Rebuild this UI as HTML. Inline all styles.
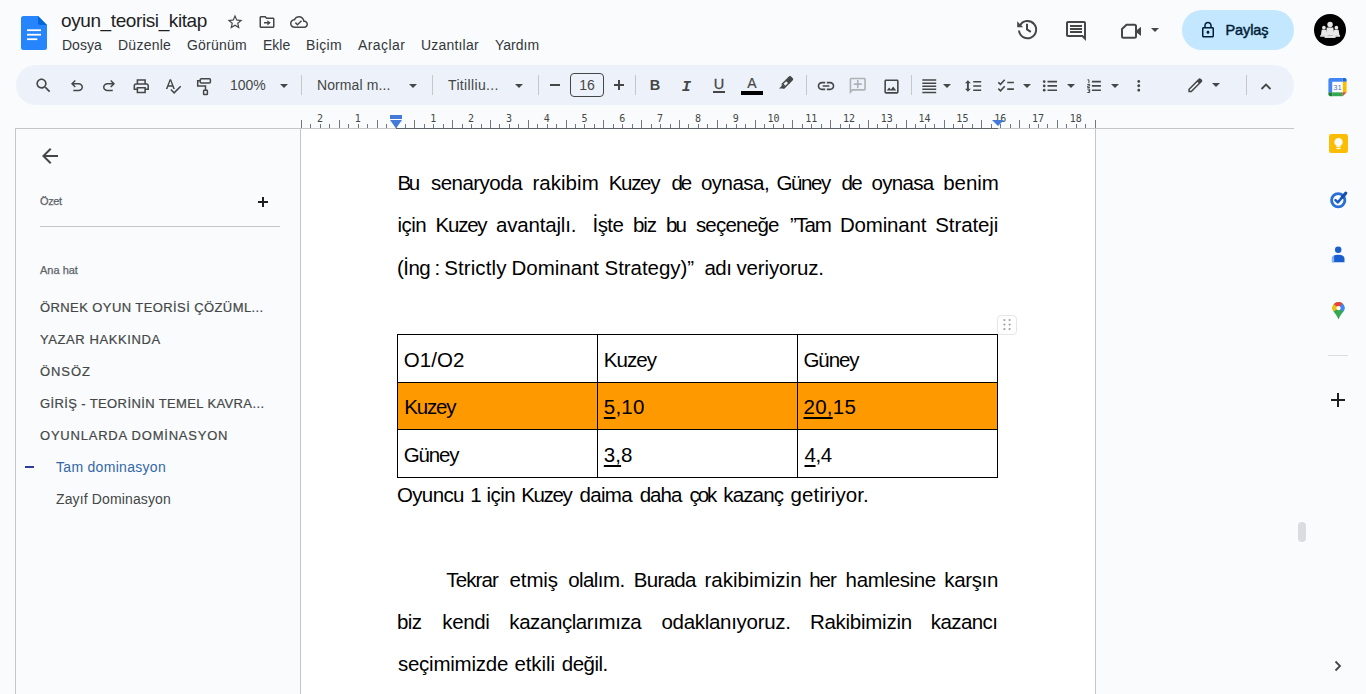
<!DOCTYPE html>
<html lang="tr">
<head>
<meta charset="utf-8">
<title>oyun_teorisi_kitap - Google Dokümanlar</title>
<style>
*{box-sizing:border-box;margin:0;padding:0}
html,body{width:1366px;height:694px;overflow:hidden;background:#f9fbfd;font-family:"Liberation Sans",sans-serif;color:#1f1f1f}
.abs{position:absolute}
svg{display:block;overflow:visible}
#app{position:relative;width:1366px;height:694px;overflow:hidden}
#title{left:61px;top:8.500px;font-size:19px;line-height:24px;color:#1f1f1f;white-space:nowrap;letter-spacing:-0.400px}
.menu{top:36.400px;font-size:14px;line-height:18px;color:#34373a;white-space:nowrap}
#toolbar{left:16px;top:65px;width:1278px;height:40px;border-radius:20px;background:#edf2fa}
.tsep{top:75px;width:1px;height:20px;background:#c7c7c7}
.ttext{top:76px;font-size:14px;line-height:18px;color:#444746;white-space:nowrap}
#share{left:1182px;top:10px;width:112px;height:40px;border-radius:20px;background:#c2e7ff}
#share span{position:absolute;left:43.500px;top:11px;font-size:14.500px;font-weight:normal;color:#001d35;line-height:18px;letter-spacing:-0.100px;-webkit-text-stroke:0.450px #001d35}
#avatar{left:1314px;top:14px;width:32px;height:32px;border-radius:50%;background:#000}
#side{left:15px;top:128px;width:286px;height:570px;border:1px solid #c4c7c5;background:#f9fbfd}
.ol{left:40px;font-size:13px;line-height:16px;color:#444746;white-space:nowrap;letter-spacing:0.360px;-webkit-text-stroke:0.200px #444746}
.ol2{left:56px;font-size:14px;line-height:16px;color:#444746;white-space:nowrap}
.lbl{left:40px;font-size:11px;line-height:14px;color:#5f6368;white-space:nowrap;-webkit-text-stroke:0.250px #5f6368}
#paper{left:300px;top:129px;width:796px;height:570px;background:#fff;border:1px solid #c4c7c5;border-top:none}
.tk{width:1px;background:#747779}
.rn{top:112px;width:30px;text-align:center;font-family:"DejaVu Sans Mono",monospace;font-size:10px;line-height:14px;color:#444746}
.w{font-size:20.500px;line-height:28px;color:#000;white-space:pre}
u{text-decoration:underline;text-decoration-thickness:1.500px;text-underline-offset:2.500px}
</style>
</head>
<body>
<div id="app">
<div class="abs" id="docicon" style="left:21px;top:16px;width:26px;height:34px">
<svg width="26" height="34" viewBox="0 0 26 34"><path d="M2.500 0H17L26 9V31.500A2.500 2.500 0 0 1 23.500 34H2.500A2.500 2.500 0 0 1 0 31.500V2.500A2.500 2.500 0 0 1 2.500 0Z" fill="#2684fc"/><path d="M17 0L26 9H19.500A2.500 2.500 0 0 1 17 6.500Z" fill="#0066da"/><rect x="6" y="13.300" width="14" height="1.800" fill="#fff"/><rect x="6" y="17.800" width="14" height="1.800" fill="#fff"/><rect x="6" y="22.300" width="10.300" height="1.800" fill="#fff"/></svg>
</div>
<div class="abs" id="title">oyun_teorisi_kitap</div>
<div class="abs menu" style="left:62px;letter-spacing:0px">Dosya</div>
<div class="abs menu" style="left:118px;letter-spacing:0.25px">Düzenle</div>
<div class="abs menu" style="left:187px;letter-spacing:0.2px">Görünüm</div>
<div class="abs menu" style="left:263px;letter-spacing:0px">Ekle</div>
<div class="abs menu" style="left:306px;letter-spacing:0.35px">Biçim</div>
<div class="abs menu" style="left:358px;letter-spacing:0.43px">Araçlar</div>
<div class="abs menu" style="left:421px;letter-spacing:0.19px">Uzantılar</div>
<div class="abs menu" style="left:495px;letter-spacing:0px">Yardım</div>

<svg class="abs" style="left:226.0px;top:13.0px" width="18" height="18" viewBox="0 0 24 24" ><path d="M22 9.240l-7.190-.620L12 2 9.190 8.630 2 9.240l5.460 4.730L5.820 21 12 17.270 18.180 21l-1.630-7.030L22 9.240zM12 15.400l-3.760 2.270 1-4.280-3.320-2.880 4.380-.380L12 6.100l1.710 4.040 4.380.380-3.320 2.880 1 4.280L12 15.400z" fill="#444746"/></svg>
<svg class="abs" style="left:258.0px;top:13.0px" width="18" height="18" viewBox="0 0 24 24" ><path d="M20 6h-8l-2-2H4c-1.100 0-2 .900-2 2v12c0 1.100.900 2 2 2h16c1.100 0 2-.900 2-2V8c0-1.100-.900-2-2-2zm0 12H4V6h5.170l2 2H20v10zm-7.500-1.500L17 13l-4.500-3.500V12H8v2h4.500v2.500z" fill="#444746"/></svg>
<svg class="abs" style="left:290.0px;top:13.0px" width="18" height="18" viewBox="0 0 24 24" ><path d="M19.350 10.040C18.670 6.590 15.640 4 12 4 9.110 4 6.600 5.640 5.350 8.040 2.340 8.360 0 10.910 0 14c0 3.310 2.690 6 6 6h13c2.760 0 5-2.240 5-5 0-2.640-2.050-4.780-4.650-4.960zM19 18H6c-2.210 0-4-1.790-4-4 0-2.050 1.530-3.760 3.560-3.970l1.070-.110.500-.950C8.080 7.140 9.940 6 12 6c2.620 0 4.880 1.860 5.390 4.430l.300 1.500 1.530.110c1.560.100 2.780 1.410 2.780 2.960 0 1.650-1.350 3-3 3zm-9-3.820l-2.090-2.090L6.500 13.500 10 17l6.010-6.010-1.410-1.410z" fill="#444746"/></svg>
<svg class="abs" style="left:1015px;top:16.8px" width="24" height="24" viewBox="0 0 24 24" ><path d="M5.200 8.200A8.600 8.600 0 1 1 4 13.500" fill="none" stroke="#444746" stroke-width="2"/><path d="M2.200 4.300V10.200H8.100Z" fill="#444746"/><path d="M12 6.800V12.400L15.800 14.900" fill="none" stroke="#444746" stroke-width="2"/></svg>
<svg class="abs" style="left:1064.0px;top:18.5px" width="24" height="24" viewBox="0 0 24 24" ><path d="M21.990 4c0-1.100-.890-2-1.990-2H4c-1.100 0-2 .900-2 2v12c0 1.100.900 2 2 2h14l4 4-.010-18zM20 4v13.170L18.830 16H4V4h16zM6 12h12v2H6zm0-3h12v2H6zm0-3h12v2H6z" fill="#444746"/></svg>
<svg class="abs" style="left:1119px;top:20px" width="24" height="24" viewBox="0 0 24 24" ><path d="M7.500 4.700H15.500Q17 4.700 17 6.200V16.300Q17 17.800 15.500 17.800H4.500Q3 17.800 3 16.300V9Z" fill="none" stroke="#444746" stroke-width="2" stroke-linejoin="round"/><path d="M17 10.800L22 6.800V16L17 12Z" fill="#444746"/></svg>
<svg class="abs" style="left:1151px;top:28px" width="8" height="4" viewBox="0 0 8 4" ><path d="M0 0H8L4 4Z" fill="#444746"/></svg>
<div class="abs" id="share"><span>Paylaş</span></div>
<svg class="abs" style="left:1199.0px;top:21.0px" width="18" height="18" viewBox="0 0 24 24" ><path d="M18 8h-1V6c0-2.760-2.240-5-5-5S7 3.240 7 6v2H6c-1.100 0-2 .900-2 2v10c0 1.100.900 2 2 2h12c1.100 0 2-.900 2-2V10c0-1.100-.900-2-2-2zM9 6c0-1.660 1.340-3 3-3s3 1.340 3 3v2H9V6zm9 14H6V10h12v10zm-6-3c1.100 0 2-.900 2-2s-.900-2-2-2-2 .900-2 2 .900 2 2 2z" fill="#001d35"/></svg>
<div class="abs" id="avatar"></div>
<svg class="abs" style="left:1314px;top:14px" width="32" height="32" viewBox="0 0 32 32" ><circle cx="9.9" cy="13.698" r="1.848" fill="#e8e8e8"/><path d="M7.716 15.713999999999999H12.084L12.924 21.09H6.876Z" fill="#e8e8e8"/><rect x="6.204000000000001" y="21.09" width="7.392" height="1.68" fill="#e8e8e8"/><circle cx="22.4" cy="13.698" r="1.848" fill="#e8e8e8"/><path d="M20.215999999999998 15.713999999999999H24.584L25.424 21.09H19.375999999999998Z" fill="#e8e8e8"/><rect x="18.703999999999997" y="21.09" width="7.392" height="1.68" fill="#e8e8e8"/><circle cx="16.05" cy="10.528" r="2.728" fill="#e8e8e8"/><path d="M12.826 13.504H19.274L20.514000000000003 21.44H11.586Z" fill="#e8e8e8"/><rect x="10.594000000000001" y="21.44" width="10.912" height="2.48" fill="#e8e8e8"/></svg>
<div class="abs" id="toolbar"></div>
<svg class="abs" style="left:34.0px;top:76.0px" width="19" height="19" viewBox="0 0 24 24" ><path d="M15.500 14h-.790l-.280-.270C15.410 12.590 16 11.110 16 9.500 16 5.910 13.090 3 9.500 3S3 5.910 3 9.500 5.910 16 9.500 16c1.610 0 3.090-.590 4.230-1.570l.270.280v.790l5 4.990L20.490 19l-4.990-5zm-6 0C7.010 14 5 11.990 5 9.500S7.010 5 9.500 5 14 7.010 14 9.500 11.990 14 9.500 14z" fill="#444746"/></svg>
<svg class="abs" style="left:68.0px;top:76.5px" width="18" height="18" viewBox="0 -960 960 960" ><path d="M280-200v-80h284q63 0 109.500-40T720-420q0-60-46.500-100T564-560H312l104 104-56 56-200-200 200-200 56 56-104 104h252q97 0 166.500 63T800-420q0 94-69.500 157T564-200H280Z" fill="#444746"/></svg>
<svg class="abs" style="left:100.0px;top:76.5px" width="18" height="18" viewBox="0 -960 960 960" ><path d="M396-200q-97 0-166.500-63T160-420q0-94 69.500-157T396-640h252L544-744l56-56 200 200-200 200-56-56 104-104H396q-63 0-109.500 40T240-420q0 60 46.500 100T396-280h284v80H396Z" fill="#444746"/></svg>
<svg class="abs" style="left:131.75px;top:76.75px" width="18.5" height="18.5" viewBox="0 0 24 24" ><path d="M19 8h-1V3H6v5H5c-1.660 0-3 1.340-3 3v6h4v4h12v-4h4v-6c0-1.660-1.340-3-3-3zM8 5h8v3H8V5zm8 14H8v-4h8v4zm2-4v-2H6v2H4v-4c0-.550.450-1 1-1h14c.550 0 1 .450 1 1v4h-2z" fill="#444746"/></svg>
<svg class="abs" style="left:164.0px;top:76.5px" width="18" height="18" viewBox="0 0 24 24" ><path d="M12.450 16h2.090L9.430 3H7.570L2.460 16h2.090l1.120-3h5.640l1.140 3zm-6.020-5L8.500 5.480 10.570 11H6.430zm15.160.590l-8.090 8.090L9.830 16l-1.410 1.410 5.090 5.090L23 13l-1.410-1.410z" fill="#444746"/></svg>
<svg class="abs" style="left:194px;top:76px" width="20" height="20" viewBox="194 76 20 20" ><rect x="200.200" y="78.700" width="10.200" height="4.200" rx="1" fill="none" stroke="#444746" stroke-width="1.500"/><path d="M200.200 80.800H197.700V86H205.500V90.300" fill="none" stroke="#444746" stroke-width="1.500"/><rect x="203.600" y="90.300" width="3.800" height="4.200" rx="0.500" fill="none" stroke="#444746" stroke-width="1.500"/></svg>
<div class="abs ttext" style="left:230px">100%</div>
<svg class="abs" style="left:280px;top:84px" width="8" height="4" viewBox="0 0 8 4" ><path d="M0 0H8L4 4Z" fill="#444746"/></svg>
<div class="abs tsep" style="left:301px"></div>
<div class="abs ttext" style="left:317px;letter-spacing:0.100px">Normal m...</div>
<svg class="abs" style="left:409px;top:83.5px" width="8" height="4" viewBox="0 0 8 4" ><path d="M0 0H8L4 4Z" fill="#444746"/></svg>
<div class="abs tsep" style="left:432px"></div>
<div class="abs ttext" style="left:448px;letter-spacing:0.350px">Titilliu...</div>
<svg class="abs" style="left:515px;top:83.5px" width="8" height="4" viewBox="0 0 8 4" ><path d="M0 0H8L4 4Z" fill="#444746"/></svg>
<div class="abs tsep" style="left:538px"></div>
<div class="abs" style="left:550px;top:84.200px;width:10px;height:1.600px;background:#444746"></div>
<div class="abs" style="left:570px;top:73px;width:34px;height:24px;border:1px solid #444746;border-radius:4px;font-size:14px;line-height:22px;text-align:center;color:#444746">16</div>
<div class="abs" style="left:614px;top:84.200px;width:10px;height:1.600px;background:#444746"></div>
<div class="abs" style="left:618.200px;top:80px;width:1.600px;height:10px;background:#444746"></div>
<div class="abs tsep" style="left:635px"></div>
<div class="abs" style="left:649px;top:76px;width:12px;font-size:14.500px;line-height:18px;font-weight:bold;color:#444746;text-align:center">B</div>
<div class="abs" style="left:679.500px;top:78.200px;width:14px;font-family:'Liberation Mono',monospace;font-size:15.500px;line-height:18px;font-weight:bold;font-style:italic;color:#444746;text-align:center">I</div>
<div class="abs" style="left:711px;top:75.400px;width:16px;font-size:14.500px;line-height:18px;color:#444746;text-align:center;-webkit-text-stroke:0.300px #444746">U</div>
<div class="abs" style="left:713px;top:91px;width:12px;height:1.500px;background:#444746"></div>
<div class="abs" style="left:744px;top:73.600px;width:16px;font-size:14px;line-height:18px;color:#444746;text-align:center;-webkit-text-stroke:0.200px #444746">A</div>
<div class="abs" style="left:741px;top:91px;width:22px;height:4px;background:#000"></div>
<svg class="abs" style="left:776px;top:72px" width="20" height="20" viewBox="776 72 20 20" ><g transform="translate(787.400 81.800) rotate(-45)"><path d="M0 -2.700H5A1.300 1.300 0 0 1 6.300 -1.400V1.400A1.300 1.300 0 0 1 5 2.700H0Z" fill="#444746"/><rect x="-4.900" y="-2" width="5.200" height="4" fill="none" stroke="#444746" stroke-width="1.400"/><path d="M-5.400 -2.700L-7.600 -0.500V2.700H-5.400Z" fill="#444746"/></g><path d="M779 88.600L781.600 86L784.600 88.600Z" fill="#444746"/></svg>
<div class="abs tsep" style="left:806px"></div>
<svg class="abs" style="left:816.0px;top:76.0px" width="20" height="20" viewBox="0 0 24 24" ><path d="M3.900 12c0-1.710 1.390-3.100 3.100-3.100h4V7H7c-2.760 0-5 2.240-5 5s2.240 5 5 5h4v-1.900H7c-1.710 0-3.100-1.390-3.100-3.100zM8 13h8v-2H8v2zm9-6h-4v1.900h4c1.710 0 3.100 1.390 3.100 3.100s-1.390 3.100-3.100 3.100h-4V17h4c2.760 0 5-2.240 5-5s-2.240-5-5-5z" fill="#444746"/></svg>
<svg class="abs" style="left:848.25px;top:76.25px" width="19.5" height="19.5" viewBox="0 0 24 24" ><g transform="translate(24,0) scale(-1,1)"><path d="M22 4c0-1.100-.900-2-2-2H4c-1.100 0-2 .900-2 2v12c0 1.100.900 2 2 2h14l4 4V4zm-2 13.170L18.830 16H4V4h16v13.170zM13 5h-2v4H7v2h4v4h2v-4h4V9h-4z" fill="#aeb2b7"/></g></svg>
<svg class="abs" style="left:881.5px;top:76.5px" width="19" height="19" viewBox="0 0 24 24" ><path d="M19 5v14H5V5h14m0-2H5c-1.100 0-2 .900-2 2v14c0 1.100.900 2 2 2h14c1.100 0 2-.900 2-2V5c0-1.100-.900-2-2-2zm-4.860 8.860l-3 3.870L9 13.140 6 17h12l-3.860-5.140z" fill="#444746"/></svg>
<div class="abs tsep" style="left:911px"></div>
<svg class="abs" style="left:919.75px;top:76.75px" width="18.5" height="18.5" viewBox="0 0 24 24" ><path d="M3 21h18v-2H3v2zm0-4h18v-2H3v2zm0-4h18v-2H3v2zm0-4h18V7H3v2zm0-6v2h18V3H3z" fill="#444746"/></svg>
<svg class="abs" style="left:943px;top:83.5px" width="8" height="4" viewBox="0 0 8 4" ><path d="M0 0H8L4 4Z" fill="#444746"/></svg>
<svg class="abs" style="left:962px;top:76px" width="22" height="20" viewBox="962 76 22 20" ><path d="M967.900 82.500V89.500" stroke="#444746" stroke-width="1.900" fill="none"/><path d="M965 83.300L967.900 80.200L970.800 83.300Z M965 88.700L967.900 91.800L970.800 88.700Z" fill="#444746"/><path d="M973.200 81.800H981.200M973.200 86H981.200M973.200 90.200H981.200" stroke="#444746" stroke-width="1.600" fill="none"/></svg>
<svg class="abs" style="left:996px;top:76px" width="20" height="20" viewBox="996 76 20 20" ><path d="M998.300 82.300L1000.500 84.400L1004.700 79.800M998.300 88.700L1000.500 90.800L1004.700 86.200" stroke="#444746" stroke-width="1.600" fill="none"/><path d="M1007.200 82.500H1013.900M1007.200 89.100H1013.900" stroke="#444746" stroke-width="1.600" fill="none"/></svg>
<svg class="abs" style="left:1023px;top:83.5px" width="8" height="4" viewBox="0 0 8 4" ><path d="M0 0H8L4 4Z" fill="#444746"/></svg>
<svg class="abs" style="left:1040px;top:76px" width="20" height="20" viewBox="1040 76 20 20" ><circle cx="1044.200" cy="81.600" r="1.350" fill="#444746"/><circle cx="1044.200" cy="85.900" r="1.350" fill="#444746"/><circle cx="1044.200" cy="90.200" r="1.350" fill="#444746"/><path d="M1047.500 81.600H1057M1047.500 85.900H1057M1047.500 90.200H1057" stroke="#444746" stroke-width="1.600" fill="none"/></svg>
<svg class="abs" style="left:1067px;top:83.5px" width="8" height="4" viewBox="0 0 8 4" ><path d="M0 0H8L4 4Z" fill="#444746"/></svg>
<svg class="abs" style="left:1084px;top:76px" width="20" height="20" viewBox="1084 76 20 20" ><path d="M1087.500 79.800H1088.900V83.300M1087.300 84.500H1089.700V86H1087.700V87.600H1090M1087.300 89.100H1089.700V92.500H1087.300M1088.100 90.800H1089.700" stroke="#444746" stroke-width="1" fill="none"/><path d="M1091.900 81.600H1100.900M1091.900 85.900H1100.900M1091.900 90.200H1100.900" stroke="#444746" stroke-width="1.600" fill="none"/></svg>
<svg class="abs" style="left:1111px;top:83.5px" width="8" height="4" viewBox="0 0 8 4" ><path d="M0 0H8L4 4Z" fill="#444746"/></svg>
<svg class="abs" style="left:1130.25px;top:76.95px" width="17.5" height="17.5" viewBox="0 0 24 24" ><path d="M12 8c1.100 0 2-.900 2-2s-.900-2-2-2-2 .900-2 2 .900 2 2 2zm0 2c-1.100 0-2 .900-2 2s.900 2 2 2 2-.900 2-2-.900-2-2-2zm0 6c-1.100 0-2 .900-2 2s.900 2 2 2 2-.900 2-2-.900-2-2-2z" fill="#444746"/></svg>
<svg class="abs" style="left:1185.6000000000001px;top:75.7px" width="18.6" height="18.6" viewBox="0 -960 960 960" ><path d="M200-200h57l391-391-57-57-391 391v57Zm-80 80v-170l528-527q12-11 26.500-17t30.500-6q16 0 31 6t26 18l55 56q12 11 17.500 26t5.500 30q0 16-5.500 30.500T817-647L290-120H120Zm640-584-56-56 56 56Zm-141 85-28-29 57 57-29-28Z" fill="#444746"/></svg>
<svg class="abs" style="left:1212px;top:83px" width="8" height="4" viewBox="0 0 8 4" ><path d="M0 0H8L4 4Z" fill="#444746"/></svg>
<div class="abs tsep" style="left:1246px"></div>
<svg class="abs" style="left:1260px;top:82px" width="12" height="8" viewBox="0 0 12 8" ><path d="M1.500 7L6 2.500L10.500 7" fill="none" stroke="#444746" stroke-width="1.800"/></svg>
<div class="abs" style="left:15px;top:128px;width:1279px;height:1px;background:#c4c7c5"></div>
<div class="abs" style="left:396px;top:128px;width:602px;height:1px;background:#5f6368"></div>
<div class="abs tk" style="left:301px;top:120px;height:8px"></div>
<div class="abs tk" style="left:310px;top:124px;height:4px"></div>
<div class="abs tk" style="left:320px;top:124px;height:4px"></div>
<div class="abs tk" style="left:329px;top:124px;height:4px"></div>
<div class="abs tk" style="left:339px;top:120px;height:8px"></div>
<div class="abs tk" style="left:348px;top:124px;height:4px"></div>
<div class="abs tk" style="left:358px;top:124px;height:4px"></div>
<div class="abs tk" style="left:367px;top:124px;height:4px"></div>
<div class="abs tk" style="left:377px;top:120px;height:8px"></div>
<div class="abs tk" style="left:386px;top:124px;height:4px"></div>
<div class="abs tk" style="left:396px;top:124px;height:4px"></div>
<div class="abs tk" style="left:405px;top:124px;height:4px"></div>
<div class="abs tk" style="left:414px;top:120px;height:8px"></div>
<div class="abs tk" style="left:424px;top:124px;height:4px"></div>
<div class="abs tk" style="left:433px;top:124px;height:4px"></div>
<div class="abs tk" style="left:443px;top:124px;height:4px"></div>
<div class="abs tk" style="left:452px;top:120px;height:8px"></div>
<div class="abs tk" style="left:462px;top:124px;height:4px"></div>
<div class="abs tk" style="left:471px;top:124px;height:4px"></div>
<div class="abs tk" style="left:481px;top:124px;height:4px"></div>
<div class="abs tk" style="left:490px;top:120px;height:8px"></div>
<div class="abs tk" style="left:499px;top:124px;height:4px"></div>
<div class="abs tk" style="left:509px;top:124px;height:4px"></div>
<div class="abs tk" style="left:518px;top:124px;height:4px"></div>
<div class="abs tk" style="left:528px;top:120px;height:8px"></div>
<div class="abs tk" style="left:537px;top:124px;height:4px"></div>
<div class="abs tk" style="left:547px;top:124px;height:4px"></div>
<div class="abs tk" style="left:556px;top:124px;height:4px"></div>
<div class="abs tk" style="left:566px;top:120px;height:8px"></div>
<div class="abs tk" style="left:575px;top:124px;height:4px"></div>
<div class="abs tk" style="left:584px;top:124px;height:4px"></div>
<div class="abs tk" style="left:594px;top:124px;height:4px"></div>
<div class="abs tk" style="left:603px;top:120px;height:8px"></div>
<div class="abs tk" style="left:613px;top:124px;height:4px"></div>
<div class="abs tk" style="left:622px;top:124px;height:4px"></div>
<div class="abs tk" style="left:632px;top:124px;height:4px"></div>
<div class="abs tk" style="left:641px;top:120px;height:8px"></div>
<div class="abs tk" style="left:651px;top:124px;height:4px"></div>
<div class="abs tk" style="left:660px;top:124px;height:4px"></div>
<div class="abs tk" style="left:670px;top:124px;height:4px"></div>
<div class="abs tk" style="left:679px;top:120px;height:8px"></div>
<div class="abs tk" style="left:688px;top:124px;height:4px"></div>
<div class="abs tk" style="left:698px;top:124px;height:4px"></div>
<div class="abs tk" style="left:707px;top:124px;height:4px"></div>
<div class="abs tk" style="left:717px;top:120px;height:8px"></div>
<div class="abs tk" style="left:726px;top:124px;height:4px"></div>
<div class="abs tk" style="left:736px;top:124px;height:4px"></div>
<div class="abs tk" style="left:745px;top:124px;height:4px"></div>
<div class="abs tk" style="left:755px;top:120px;height:8px"></div>
<div class="abs tk" style="left:764px;top:124px;height:4px"></div>
<div class="abs tk" style="left:773px;top:124px;height:4px"></div>
<div class="abs tk" style="left:783px;top:124px;height:4px"></div>
<div class="abs tk" style="left:792px;top:120px;height:8px"></div>
<div class="abs tk" style="left:802px;top:124px;height:4px"></div>
<div class="abs tk" style="left:811px;top:124px;height:4px"></div>
<div class="abs tk" style="left:821px;top:124px;height:4px"></div>
<div class="abs tk" style="left:830px;top:120px;height:8px"></div>
<div class="abs tk" style="left:840px;top:124px;height:4px"></div>
<div class="abs tk" style="left:849px;top:124px;height:4px"></div>
<div class="abs tk" style="left:859px;top:124px;height:4px"></div>
<div class="abs tk" style="left:868px;top:120px;height:8px"></div>
<div class="abs tk" style="left:877px;top:124px;height:4px"></div>
<div class="abs tk" style="left:887px;top:124px;height:4px"></div>
<div class="abs tk" style="left:896px;top:124px;height:4px"></div>
<div class="abs tk" style="left:906px;top:120px;height:8px"></div>
<div class="abs tk" style="left:915px;top:124px;height:4px"></div>
<div class="abs tk" style="left:925px;top:124px;height:4px"></div>
<div class="abs tk" style="left:934px;top:124px;height:4px"></div>
<div class="abs tk" style="left:944px;top:120px;height:8px"></div>
<div class="abs tk" style="left:953px;top:124px;height:4px"></div>
<div class="abs tk" style="left:962px;top:124px;height:4px"></div>
<div class="abs tk" style="left:972px;top:124px;height:4px"></div>
<div class="abs tk" style="left:981px;top:120px;height:8px"></div>
<div class="abs tk" style="left:991px;top:124px;height:4px"></div>
<div class="abs tk" style="left:1000px;top:124px;height:4px"></div>
<div class="abs tk" style="left:1010px;top:124px;height:4px"></div>
<div class="abs tk" style="left:1019px;top:120px;height:8px"></div>
<div class="abs tk" style="left:1029px;top:124px;height:4px"></div>
<div class="abs tk" style="left:1038px;top:124px;height:4px"></div>
<div class="abs tk" style="left:1047px;top:124px;height:4px"></div>
<div class="abs tk" style="left:1057px;top:120px;height:8px"></div>
<div class="abs tk" style="left:1066px;top:124px;height:4px"></div>
<div class="abs tk" style="left:1076px;top:124px;height:4px"></div>
<div class="abs tk" style="left:1085px;top:124px;height:4px"></div>
<div class="abs tk" style="left:1095px;top:120px;height:8px"></div>
<div class="abs rn" style="left:304.9px">2</div>
<div class="abs rn" style="left:342.7px">1</div>
<div class="abs rn" style="left:418.3px">1</div>
<div class="abs rn" style="left:456.1px">2</div>
<div class="abs rn" style="left:493.9px">3</div>
<div class="abs rn" style="left:531.7px">4</div>
<div class="abs rn" style="left:569.5px">5</div>
<div class="abs rn" style="left:607.3px">6</div>
<div class="abs rn" style="left:645.1px">7</div>
<div class="abs rn" style="left:682.9px">8</div>
<div class="abs rn" style="left:720.7px">9</div>
<div class="abs rn" style="left:758.5px">10</div>
<div class="abs rn" style="left:796.3px">11</div>
<div class="abs rn" style="left:834.1px">12</div>
<div class="abs rn" style="left:871.8px">13</div>
<div class="abs rn" style="left:909.6px">14</div>
<div class="abs rn" style="left:947.4px">15</div>
<div class="abs rn" style="left:985.2px">16</div>
<div class="abs rn" style="left:1023.0px">17</div>
<div class="abs rn" style="left:1060.8px">18</div>
<svg class="abs" style="left:390px;top:115px" width="12" height="13" viewBox="0 0 12 13" ><rect x="0" y="0" width="12" height="4" fill="#437ad8"/><path d="M0 5H12L6.300 13H5.700Z" fill="#437ad8"/></svg>
<svg class="abs" style="left:992px;top:120px" width="12" height="6" viewBox="0 0 12 6" ><path d="M0 0H12L6 6Z" fill="#437ad8"/></svg>
<div class="abs" id="side"></div>
<svg class="abs" style="left:38.2px;top:143.8px" width="24" height="24" viewBox="0 0 24 24" ><path d="M20 11H7.830l5.590-5.590L12 4l-8 8 8 8 1.410-1.410L7.830 13H20v-2z" fill="#444746"/></svg>
<div class="abs lbl" style="top:194px;letter-spacing:-0.400px">Özet</div>
<div class="abs" style="left:258px;top:201.200px;width:10px;height:1.800px;background:#1f1f1f"></div>
<div class="abs" style="left:262.100px;top:197px;width:1.800px;height:10px;background:#1f1f1f"></div>
<div class="abs" style="left:40px;top:226px;width:240px;height:1px;background:#c4c7c5"></div>
<div class="abs lbl" style="top:263px">Ana hat</div>
<div class="abs ol" style="top:299.7px;letter-spacing:0.41px">ÖRNEK OYUN TEORİSİ ÇÖZÜML...</div>
<div class="abs ol" style="top:331.7px;letter-spacing:0.59px">YAZAR HAKKINDA</div>
<div class="abs ol" style="top:363.7px;letter-spacing:0.93px">ÖNSÖZ</div>
<div class="abs ol" style="top:395.7px;letter-spacing:0.38px">GİRİŞ - TEORİNİN TEMEL KAVRA...</div>
<div class="abs ol" style="top:427.7px;letter-spacing:0.78px">OYUNLARDA DOMİNASYON</div>
<div class="abs" style="left:25px;top:466px;width:9px;height:2px;background:#2b3d99"></div>
<div class="abs ol2" style="top:459px;color:#3366a6;letter-spacing:0.300px">Tam dominasyon</div>
<div class="abs ol2" style="top:491px;letter-spacing:0.130px">Zayıf Dominasyon</div>
<div class="abs" id="paper"></div>
<div class="abs" style="left:397px;top:334px;width:601px;height:144px;border:1px solid #000"></div>
<div class="abs" style="left:398px;top:383px;width:599px;height:46px;background:#ff9900"></div>
<div class="abs" style="left:397px;top:382px;width:601px;height:1px;background:#000"></div>
<div class="abs" style="left:397px;top:429px;width:601px;height:1px;background:#000"></div>
<div class="abs" style="left:597px;top:334px;width:1px;height:144px;background:#000"></div>
<div class="abs" style="left:797px;top:334px;width:1px;height:144px;background:#000"></div>
<div class="ln" id="l1">
<span class="abs w" style="left:397.6px;top:169.0px;letter-spacing:-2.60px">Bu</span> 
<span class="abs w" style="left:430.9px;top:169.0px;letter-spacing:-0.51px">senaryoda</span> 
<span class="abs w" style="left:532.4px;top:169.0px;letter-spacing:0.05px">rakibim</span> 
<span class="abs w" style="left:608.7px;top:169.0px;letter-spacing:-1.30px">Kuzey</span> 
<span class="abs w" style="left:671.4px;top:169.0px;letter-spacing:-2.00px">de</span> 
<span class="abs w" style="left:700.9px;top:169.0px;letter-spacing:-0.52px">oynasa,</span> 
<span class="abs w" style="left:776.4px;top:169.0px;letter-spacing:-1.38px">Güney</span> 
<span class="abs w" style="left:841.6px;top:169.0px;letter-spacing:-1.80px">de</span> 
<span class="abs w" style="left:871.6px;top:169.0px;letter-spacing:-0.72px">oynasa</span> 
<span class="abs w" style="left:943.2px;top:169.0px;letter-spacing:-0.05px">benim</span> 
</div>
<div class="ln" id="l2">
<span class="abs w" style="left:397.6px;top:211.0px;letter-spacing:-0.57px">için</span> 
<span class="abs w" style="left:435.5px;top:211.0px;letter-spacing:-1.22px">Kuzey</span> 
<span class="abs w" style="left:496.1px;top:211.0px;letter-spacing:-0.20px">avantajlı.</span> 
<span class="abs w" style="left:592.6px;top:211.0px;letter-spacing:-0.60px">İşte</span> 
<span class="abs w" style="left:633.0px;top:211.0px;letter-spacing:-1.15px">biz</span> 
<span class="abs w" style="left:665.9px;top:211.0px;letter-spacing:-1.70px">bu</span> 
<span class="abs w" style="left:695.9px;top:211.0px;letter-spacing:-0.77px">seçeneğe</span> 
<span class="abs w" style="left:789.9px;top:211.0px;letter-spacing:-1.23px">”Tam</span> 
<span class="abs w" style="left:839.9px;top:211.0px;letter-spacing:-0.17px">Dominant</span> 
<span class="abs w" style="left:935.3px;top:211.0px;letter-spacing:-0.11px">Strateji</span> 
</div>
<div class="ln" id="l3">
<span class="abs w" style="left:396.9px;top:254.0px;letter-spacing:-0.50px">(İng</span> 
<span class="abs w" style="left:434.4px;top:254.0px;letter-spacing:0.00px">:</span> 
<span class="abs w" style="left:444.2px;top:254.0px;letter-spacing:0.10px">Strictly</span> 
<span class="abs w" style="left:511.6px;top:254.0px;letter-spacing:-0.04px">Dominant</span> 
<span class="abs w" style="left:604.6px;top:254.0px;letter-spacing:-0.06px">Strategy)”</span> 
<span class="abs w" style="left:704.4px;top:254.0px;letter-spacing:-0.50px">adı</span> 
<span class="abs w" style="left:736.5px;top:254.0px;letter-spacing:-0.16px">veriyoruz.</span> 
</div>
<div class="ln" id="oy">
<span class="abs w" style="left:396.9px;top:480.6px;letter-spacing:-0.62px">Oyuncu</span> 
<span class="abs w" style="left:470.3px;top:480.6px;letter-spacing:0.00px">1</span> 
<span class="abs w" style="left:486.6px;top:480.6px;letter-spacing:-0.60px">için</span> 
<span class="abs w" style="left:521.3px;top:480.6px;letter-spacing:-1.40px">Kuzey</span> 
<span class="abs w" style="left:579.5px;top:480.6px;letter-spacing:-0.68px">daima</span> 
<span class="abs w" style="left:639.7px;top:480.6px;letter-spacing:-0.97px">daha</span> 
<span class="abs w" style="left:689.5px;top:480.6px;letter-spacing:-2.05px">çok</span> 
<span class="abs w" style="left:723.3px;top:480.6px;letter-spacing:-0.86px">kazanç</span> 
<span class="abs w" style="left:790.5px;top:480.6px;letter-spacing:0.08px">getiriyor.</span> 
</div>
<div class="ln" id="t1">
<span class="abs w" style="left:446.3px;top:566.0px;letter-spacing:-0.88px">Tekrar</span> 
<span class="abs w" style="left:509.6px;top:566.0px;letter-spacing:-0.15px">etmiş</span> 
<span class="abs w" style="left:568.2px;top:566.0px;letter-spacing:-0.57px">olalım.</span> 
<span class="abs w" style="left:633.7px;top:566.0px;letter-spacing:-0.66px">Burada</span> 
<span class="abs w" style="left:704.4px;top:566.0px;letter-spacing:0.04px">rakibimizin</span> 
<span class="abs w" style="left:809.3px;top:566.0px;letter-spacing:-1.10px">her</span> 
<span class="abs w" style="left:845.6px;top:566.0px;letter-spacing:-0.35px">hamlesine</span> 
<span class="abs w" style="left:944.3px;top:566.0px;letter-spacing:-0.36px">karşın</span> 
</div>
<div class="ln" id="t2">
<span class="abs w" style="left:396.9px;top:608.0px;letter-spacing:-0.55px">biz</span> 
<span class="abs w" style="left:442.3px;top:608.0px;letter-spacing:-0.35px">kendi</span> 
<span class="abs w" style="left:509.3px;top:608.0px;letter-spacing:-0.42px">kazançlarımıza</span> 
<span class="abs w" style="left:661.5px;top:608.0px;letter-spacing:-0.30px">odaklanıyoruz.</span> 
<span class="abs w" style="left:809.9px;top:608.0px;letter-spacing:-0.26px">Rakibimizin</span> 
<span class="abs w" style="left:930.8px;top:608.0px;letter-spacing:-0.60px">kazancı</span> 
</div>
<div class="ln" id="t3">
<span class="abs w" style="left:397.9px;top:649.9px;letter-spacing:-0.23px">seçimimizde</span> 
<span class="abs w" style="left:514.4px;top:649.9px;letter-spacing:-0.08px">etkili</span> 
<span class="abs w" style="left:561.8px;top:649.9px;letter-spacing:-0.54px">değil.</span> 
</div>
<div class="ln" id="c11">
<span class="abs w" style="left:403.7px;top:346.0px;letter-spacing:0.08px">O1/O2</span> 
</div>
<div class="ln" id="c12">
<span class="abs w" style="left:603.8px;top:346.0px;letter-spacing:-0.95px">Kuzey</span> 
</div>
<div class="ln" id="c13">
<span class="abs w" style="left:803.5px;top:346.0px;letter-spacing:-1.10px">Güney</span> 
</div>
<div class="ln" id="c21">
<span class="abs w" style="left:404.2px;top:393.2px;letter-spacing:-1.15px">Kuzey</span> 
</div>
<div class="ln" id="c22">
<span class="abs w" style="left:603.8px;top:393.2px;letter-spacing:0.23px"><u>5</u>,10</span> 
</div>
<div class="ln" id="c23">
<span class="abs w" style="left:803.5px;top:393.2px;letter-spacing:0.25px"><u>20,</u>15</span> 
</div>
<div class="ln" id="c31">
<span class="abs w" style="left:403.7px;top:441.0px;letter-spacing:-1.17px">Güney</span> 
</div>
<div class="ln" id="c32">
<span class="abs w" style="left:603.8px;top:441.0px;letter-spacing:0.10px"><u>3,</u>8</span> 
</div>
<div class="ln" id="c33">
<span class="abs w" style="left:804.5px;top:441.0px;letter-spacing:-0.40px"><u>4</u>,4</span> 
</div>
<div class="abs" style="left:997px;top:314.500px;width:20px;height:20px;border:1px solid #e6e6e6;border-radius:4px;background:#fff"></div>
<svg class="abs" style="left:997px;top:314px" width="20" height="20" viewBox="997 314 20 20" ><circle cx="1004.4" cy="320.1" r="1.150" fill="#a6a6a6"/><circle cx="1004.4" cy="324.6" r="1.150" fill="#a6a6a6"/><circle cx="1004.4" cy="329.1" r="1.150" fill="#a6a6a6"/><circle cx="1009.6" cy="320.1" r="1.150" fill="#a6a6a6"/><circle cx="1009.6" cy="324.6" r="1.150" fill="#a6a6a6"/><circle cx="1009.6" cy="329.1" r="1.150" fill="#a6a6a6"/></svg>
<svg class="abs" style="left:1328.1px;top:77.8px" width="19" height="18.2" viewBox="0 0 20 20" ><rect x="0" y="0" width="20" height="20" rx="2" fill="#fff"/><path d="M0 2Q0 0 2 0H15.800V4.200H4.200V15.800H0Z" fill="#4285f4"/><path d="M15.800 0H18Q20 0 20 2V4.200H15.800Z" fill="#1967d2"/><rect x="15.800" y="4.200" width="4.200" height="11.600" fill="#fbbc04"/><path d="M0 15.800H4.200V20H2Q0 20 0 18Z" fill="#188038"/><rect x="4.200" y="15.800" width="11.600" height="4.200" fill="#34a853"/><path d="M15.800 15.800H20L15.800 20Z" fill="#ea4335"/><text x="10" y="13.100" font-family="Liberation Sans, sans-serif" font-size="8.500" fill="#4a72b8" text-anchor="middle">31</text></svg>
<svg class="abs" style="left:1328.5px;top:133.5px" width="19" height="19" viewBox="0 0 20 20" ><rect x="0" y="0" width="20" height="20" rx="2.500" fill="#fbbc04"/><path d="M10 4.200A4.300 4.300 0 0 1 12.200 12.200V13.400H7.800V12.200A4.300 4.300 0 0 1 10 4.200Z" fill="#fdfdf5"/><rect x="7.800" y="14.400" width="4.400" height="1.500" fill="#fdfdf5"/></svg>
<svg class="abs" style="left:1328.5px;top:189.5px" width="19" height="19" viewBox="0 0 20 20" ><circle cx="9.700" cy="10.800" r="7" fill="none" stroke="#2a6fd6" stroke-width="3"/><path d="M6.800 10.600L9.300 13L14.500 7" fill="none" stroke="#1b5cc4" stroke-width="2.600" stroke-linecap="round" stroke-linejoin="round"/><path d="M14 7.500L17.600 3.400" fill="none" stroke="#174ea6" stroke-width="3.400" stroke-linecap="round"/></svg>
<svg class="abs" style="left:1331.2px;top:246.4px" width="14.4" height="16.4" viewBox="0 0 16 18" ><circle cx="8" cy="4" r="3.600" fill="#1a5fd0"/><path d="M1 18V14Q1 9.500 8 9.500Q15 9.500 15 14V18Z" fill="#1a5fd0"/><path d="M1 18V14Q1 11.500 3.500 10.500V18Z" fill="#8ab4f8"/></svg>
<svg class="abs" style="left:1331.8px;top:302.4px" width="13" height="17.4" viewBox="0 0 14 20" ><path d="M7 0A7 7 0 0 1 14 7C14 11 9.500 14 7 20C4.500 14 0 11 0 7A7 7 0 0 1 7 0Z" fill="#34a853"/><path d="M7 0A7 7 0 0 1 14 7C14 8.500 13.400 9.800 12.500 11L7 7Z" fill="#4285f4"/><path d="M7 0A7 7 0 0 0 1.600 2.600L7 7L11.500 1.600A7 7 0 0 0 7 0Z" fill="#ea4335"/><path d="M1.600 2.600A7 7 0 0 0 0 7C0 8.500.600 9.800 1.500 11L7 7Z" fill="#fbbc04"/><circle cx="7" cy="7" r="2.500" fill="#fff"/></svg>
<div class="abs" style="left:1328px;top:355px;width:20px;height:1px;background:#dadce0"></div>
<div class="abs" style="left:1331px;top:399px;width:14px;height:2px;background:#1f1f1f"></div>
<div class="abs" style="left:1337px;top:393px;width:2px;height:14px;background:#1f1f1f"></div>
<svg class="abs" style="left:1334px;top:660px" width="8" height="12" viewBox="0 0 8 12" ><path d="M1.500 1.500L6 6L1.500 10.500" fill="none" stroke="#444746" stroke-width="1.800"/></svg>
<div class="abs" style="left:1298px;top:522px;width:8px;height:20px;border-radius:4px;background:#dadce0"></div>
</div>
</body>
</html>
